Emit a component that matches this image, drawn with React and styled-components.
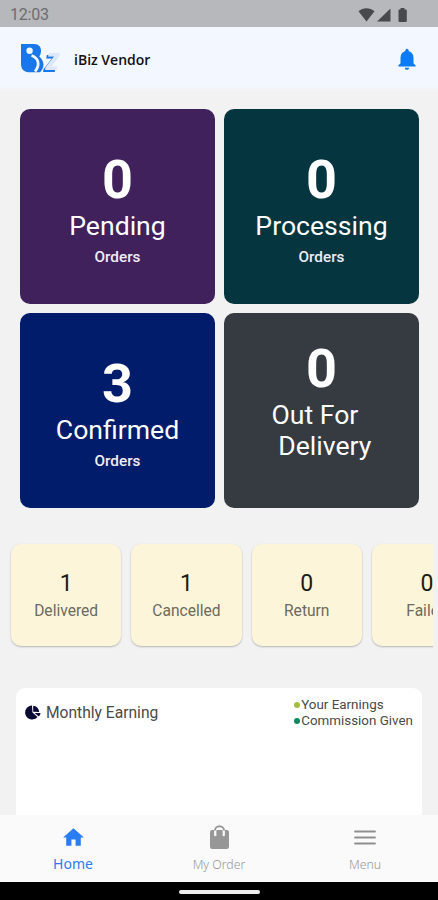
import React from 'react'
import styled, { createGlobalStyle } from 'styled-components';
import { MdHome, MdNotifications } from 'react-icons/md'

const orders = [
  { count: 0, label: 'Pending', color: '#41215c', sub: true },
  { count: 0, label: 'Processing', color: '#053640', sub: true },
  { count: 3, label: 'Confirmed', color: '#001c6b', sub: true },
  { count: 0, label: 'Out For  \n Delivery', color: '#363a41', sub: false },
]

const stats = [
  { count: 1, label: 'Delivered' },
  { count: 1, label: 'Cancelled' },
  { count: 0, label: 'Return' },
  { count: 0, label: 'Failed' },
]

const Logo = () => (
  <svg width="48" height="44" viewBox="0 -6 48 44">
    <path d="M1 1H14C19 1 21 4 21 7.500C21 10.500 20.300 12 19.300 13.500C24.500 18 25 25 20 29.200H8.500C4 29 1 26 1 21Z" fill="#1877ea" />
    <circle cx="9.600" cy="7.800" r="3.200" fill="#f3f7ff" />
    <path d="M11.500 12.500C18.500 15 20.500 21.500 15 28.500" fill="none" stroke="#f3f7ff" strokeWidth="2.800" />
    <ZText x="25.800" y="27">z</ZText>
  </svg>
)

const StatusIcons = () => (
  <svg width="50" height="16" viewBox="0 0 50 16">
    <path d="M0.500 4.200C5 0.300 12 0.300 16.500 4.200L8.500 14.500Z" fill="#47494c" />
    <path d="M19 14.500L32.500 1.500V14.500Z" fill="#47494c" />
    <path d="M40.500 3.300Q40.500 2.500 41.300 2.500H42.500V1H46.500V2.500H47.700Q48.800 2.500 48.800 3.500V14Q48.800 15 47.800 15H41.500Q40.500 15 40.500 14Z" fill="#47494c" />
  </svg>
)

const BagIcon = () => (
  <svg width="21" height="25" viewBox="0 0 21 25">
    <rect x="1" y="5" width="19" height="19" rx="2.200" fill="#979797" />
    <path d="M6.300 10V5.500A4.200 4.200 0 0 1 14.700 5.500V10" fill="none" stroke="#fafafa" strokeWidth="2.400" strokeLinecap="round" />
    <path d="M6 5.500A4.500 4.300 0 0 1 15 5.500" fill="none" stroke="#979797" strokeWidth="2" />
    <path d="M8.300 9.500V5.500M12.700 9.500V5.500" stroke="#979797" strokeWidth="1.200" />
  </svg>
)

const MenuIcon = () => (
  <svg width="22" height="16" viewBox="0 0 22 16">
    <path d="M1 2H21M1 8H21M1 14H21" stroke="#8f8f8f" strokeWidth="1.800" strokeLinecap="round" />
  </svg>
)

const PieIcon = () => (
  <svg width="16" height="15" viewBox="0 0 16 15">
    <path d="M7 .5A7 7 0 1 0 12.500 12L7.500 7.500Z" fill="#0b0a35" />
    <path d="M8.200 .7A6.500 6.500 0 0 1 14.200 7L8.200 6.800Z" fill="#0b0a35" />
    <path d="M9.500 8H15.500Q15.300 10 13.800 11.500Z" fill="#0b0a35" />
  </svg>
)

export default function App() {
  return (
    <Screen>
      <GlobalStyle />
      <StatusBar>
        12:03
        <StatusIcons />
      </StatusBar>
      <Header>
        <Logo />
        <Title>iBiz Vendor</Title>
        <MdNotifications size={26} color="#0b7cf5" />
      </Header>
      <Content>
        <OrderGrid>
          {orders.map((o) => (
            <OrderCard key={o.label} $color={o.color} $top={o.sub ? 40 : 25}>
              <Count>{o.count}</Count>
              <Label>{o.label}</Label>
              {o.sub && <Sub>Orders</Sub>}
            </OrderCard>
          ))}
        </OrderGrid>
        <StatRow>
          {stats.map((s) => (
            <StatCard key={s.label}>
              <StatCount>{s.count}</StatCount>
              <StatLabel>{s.label}</StatLabel>
            </StatCard>
          ))}
        </StatRow>
        <EarningCard>
          <PieIcon />
          <EarningTitle>Monthly Earning</EarningTitle>
          <Legend>
            <LegendItem $color="#a4bf3c">Your Earnings</LegendItem>
            <LegendItem $color="#0a8a63">Commission Given</LegendItem>
          </Legend>
        </EarningCard>
      </Content>
      <TabBar>
        <Tab $active>
          <MdHome size={25} />
          <span>Home</span>
        </Tab>
        <Tab>
          <BagIcon />
          <span>My Order</span>
        </Tab>
        <Tab>
          <MenuIcon />
          <span>Menu</span>
        </Tab>
      </TabBar>
      <SystemBar>
        <Pill />
      </SystemBar>
    </Screen>
  )
}

const GlobalStyle = createGlobalStyle`
  body {
    margin: 0;
    background: #f2f2f2;
  }

  * {
    box-sizing: border-box;
  }
`;
const Screen = styled.div`
  width: 438px;
  height: 900px;
  display: flex;
  flex-direction: column;
  overflow: hidden;
  background: #f2f2f2;
  font-family: Roboto, sans-serif;
`;
const StatusBar = styled.div`
  height: 27px;
  flex-shrink: 0;
  display: flex;
  justify-content: space-between;
  align-items: center;
  padding: 2px 30px 0 10px;
  background: #b6b8bc;
  color: #6b6d70;
  font-size: 16px;
  letter-spacing: -0.2px;
`;
const Header = styled.div`
  height: 64px;
  flex-shrink: 0;
  display: flex;
  align-items: center;
  padding: 0 18px 0 20px;
  background: linear-gradient(#f3f7ff 92%, #f2f2f2);
`;
const ZText = styled.text`
  fill: #dfe8fb;
  font-family: "Open Sans", sans-serif;
  font-size: 30px;
  font-style: italic;
  font-weight: 700;
  filter: drop-shadow(-1.5px 2px 0 #1877ea);
`;
const Title = styled.div`
  flex: 1;
  margin-left: 6px;
  color: #111;
  font-family: "Open Sans", sans-serif;
  font-size: 14px;
  font-weight: 600;
`;
const Content = styled.div`
  flex: 1;
  min-height: 0;
  overflow: hidden;
  padding-top: 18px;
`;
const OrderGrid = styled.div`
  display: grid;
  grid-template-columns: 195px 195px;
  grid-auto-rows: 195px;
  gap: 9px;
  padding-left: 20px;
`;
const OrderCard = styled.div`
  padding-top: ${(p) => p.$top}px;
  border-radius: 10px;
  background: ${(p) => p.$color};
  color: #fff;
  text-align: center;
`;
const Count = styled.div`
  font-size: 54px;
  font-weight: 700;
  line-height: 61px;
`;
const Label = styled.div`
  font-size: 26.600px;
  line-height: 31px;
  white-space: pre;
`;
const Sub = styled.div`
  margin-top: 7px;
  font-size: 15.300px;
  font-weight: 500;
  line-height: 18px;
  color: #f0edf4;
`;
const StatRow = styled.div`
  display: flex;
  gap: 10px;
  width: 433px;
  margin-top: 32.500px;
  padding: 3px 0 4px 11px;
  overflow: hidden;
`;
const StatCard = styled.div`
  flex: 0 0 110.300px;
  height: 102px;
  padding-top: 26px;
  border-radius: 10px;
  background: #fdf5da;
  box-shadow: 0 1px 2px rgba(0, 0, 0, 0.25);
  text-align: center;
`;
const StatCount = styled.div`
  color: #1c1c18;
  font-size: 23px;
  line-height: 28px;
`;
const StatLabel = styled.div`
  color: #6d6a5e;
  font-size: 15.600px;
  line-height: 26px;
`;
const EarningCard = styled.div`
  display: flex;
  align-items: flex-start;
  height: 200px;
  margin: 38px 16px 0;
  padding: 9px 9px 0 9px;
  border-radius: 9px;
  background: #fff;

  svg {
    margin-top: 8px;
  }
`;
const EarningTitle = styled.div`
  flex: 1;
  margin-left: 5px;
  color: #4a4a4a;
  font-size: 15.600px;
  line-height: 32px;
`;
const Legend = styled.div`
  display: flex;
  flex-direction: column;
`;
const LegendItem = styled.div`
  display: flex;
  align-items: center;
  color: #4a4a4a;
  font-size: 13.400px;
  line-height: 16px;

  &::before {
    content: '';
    width: 6px;
    height: 6px;
    margin-right: 1px;
    border-radius: 50%;
    background: ${(p) => p.$color};
  }
`;
const TabBar = styled.div`
  height: 67px;
  flex-shrink: 0;
  display: flex;
  background: #fafafa;
`;
const Tab = styled.div`
  flex: 1;
  display: flex;
  flex-direction: column;
  align-items: center;
  color: ${(p) => (p.$active ? '#2a7df0' : '#979797')};
  font-family: "Noto Sans", sans-serif;
  font-size: ${(p) => (p.$active ? 14 : 12.3)}px;
  font-weight: ${(p) => (p.$active ? 400 : 300)};

  svg {
    height: 25px;
    margin-top: 10px;
  }

  span {
    line-height: 20px;
    margin-top: ${(p) => (p.$active ? 4 : 5)}px;
  }
`;
const SystemBar = styled.div`
  height: 18px;
  flex-shrink: 0;
  display: flex;
  justify-content: center;
  align-items: center;
  padding-top: 2px;
  background: #000;
`;
const Pill = styled.div`
  width: 81px;
  height: 4px;
  border-radius: 2px;
  background: #eee;
`;
